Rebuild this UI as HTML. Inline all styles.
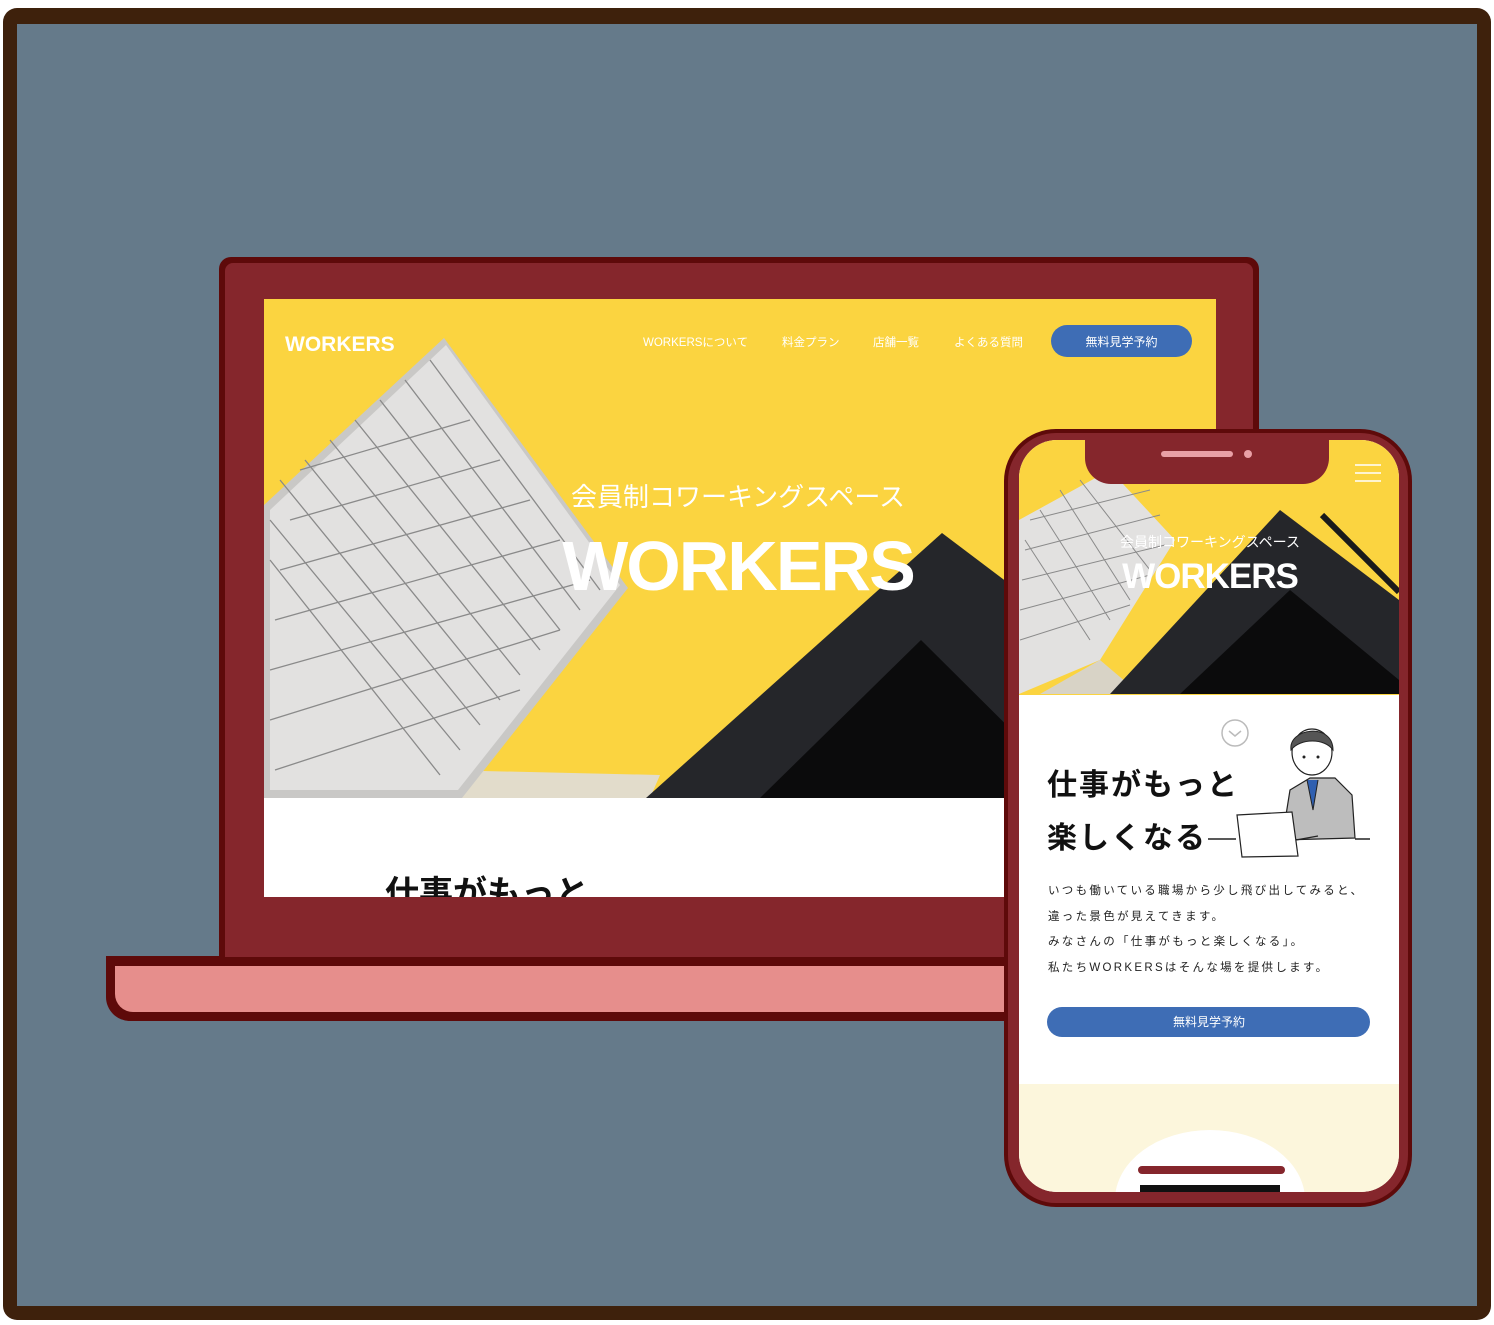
<!DOCTYPE html>
<html><head><meta charset="utf-8"><style>
*{margin:0;padding:0;box-sizing:border-box}
body{width:1494px;height:1325px;background:#fff;position:relative;overflow:hidden;font-family:"Liberation Sans","Noto Sans CJK JP",sans-serif}
.a{position:absolute}
</style></head><body>
<div class="a" style="left:3px;top:8px;width:1488px;height:1312px;background:#3e210c;border-radius:14px"></div>
<div class="a" style="left:17px;top:24px;width:1460px;height:1282px;background:#657a8a"></div>

<div class="a" style="left:106px;top:956px;width:1270px;height:65px;background:#5e0a0a;border-radius:0 0 0 24px"></div>
<div class="a" style="left:115px;top:966px;width:1255px;height:46px;background:#e68e8c;border-radius:0 0 0 18px"></div>
<div class="a" style="left:219px;top:257px;width:1040px;height:702px;background:#5e0a0a;border-radius:12px 12px 0 0"></div>
<div class="a" style="left:225px;top:263px;width:1028px;height:694px;background:#85262c;border-radius:8px 8px 0 0"></div>
<div class="a" style="left:264px;top:299px;width:952px;height:598px;background:#fff;overflow:hidden">
<svg width="952" height="598" viewBox="264 299 952 598" style="position:absolute;left:0;top:0">
<rect x="264" y="299" width="952" height="499" fill="#fbd440"/>
<polygon points="440,770 660,775 650,798 440,798" fill="#e2dccb"/>
<polygon points="444,338 628,588 462,798 264,798 264,505" fill="#c9c8c6"/>
<polygon points="446,345 620,585 458,790 270,790 270,510" fill="#e2e1e0"/>
<g stroke="#8a8a8a" stroke-width="1.3" fill="none">
<path d="M430,360 L600,590 M405,380 L580,610 M380,400 L560,630 M355,420 L540,650 M330,440 L520,675 M305,460 L500,700 M280,480 L480,725 M270,520 L460,750 M270,560 L440,775"/>
<path d="M300,470 L470,420 M290,520 L500,460 M280,570 L530,500 M275,620 L560,540 M270,670 L590,580 M270,720 L560,630 M275,770 L520,690"/>
</g>
<polygon points="646,798 942,533 1216,740 1216,798" fill="#25262a"/>
<polygon points="760,798 921,640 1080,798" fill="#0b0b0c"/>
<text x="285" y="351" fill="#fff" font-size="21" font-weight="bold" font-family="Liberation Sans">WORKERS</text>
<g fill="#fff" font-size="11.5">
<text x="643" y="346">WORKERSについて</text>
<text x="782" y="346">料金プラン</text>
<text x="873" y="346">店舗一覧</text>
<text x="954" y="346">よくある質問</text>
</g>
<rect x="1051" y="325" width="141" height="32" rx="16" fill="#3e6db5"/>
<text x="1121.5" y="346" fill="#fff" font-size="12" text-anchor="middle">無料見学予約</text>
<text x="738" y="506" fill="#fff" font-size="26" text-anchor="middle">会員制コワーキングスペース</text>
<text x="738" y="590" fill="#fff" font-size="70" font-weight="bold" text-anchor="middle" letter-spacing="-2">WORKERS</text>
<text x="385" y="905" fill="#111" font-size="34" font-weight="bold">仕事がもっと</text>
</svg>
</div>

<div class="a" style="left:1004px;top:429px;width:408px;height:778px;background:#5e0a0a;border-radius:52px"></div>
<div class="a" style="left:1008px;top:433px;width:400px;height:770px;background:#85262c;border-radius:48px"></div>
<div class="a" style="left:1019px;top:440px;width:380px;height:752px;background:#fff;border-radius:38px;overflow:hidden">
<svg width="380" height="752" viewBox="1019 440 380 752" style="position:absolute;left:0;top:0">
<rect x="1019" y="440" width="380" height="255" fill="#fbd440"/>
<polygon points="1110,470 1175,540 1100,660 1019,694 1019,520" fill="#e2e1e0"/>
<polygon points="1040,694 1100,660 1140,694" fill="#d8d3c6"/>
<g stroke="#8a8a8a" stroke-width="1"><path d="M1030,520 L1150,490 M1025,550 L1160,515 M1022,580 L1165,545 M1020,610 L1150,575 M1020,640 L1130,605 M1060,490 L1130,600 M1040,510 L1110,620 M1025,540 L1090,640 M1080,480 L1150,570"/></g>
<polygon points="1110,694 1280,510 1399,600 1399,694" fill="#25262a"/>
<polygon points="1180,694 1290,590 1399,680 1399,694" fill="#0b0b0c"/>
<line x1="1322" y1="515" x2="1399" y2="592" stroke="#1a1a1a" stroke-width="6"/>
<text x="1210" y="547" fill="#fff" font-size="14" text-anchor="middle">会員制コワーキングスペース</text>
<text x="1210" y="588" fill="#fff" font-size="35" font-weight="bold" text-anchor="middle" letter-spacing="-1">WORKERS</text>
<g stroke="#fff" stroke-width="1.5"><line x1="1355" y1="465" x2="1381" y2="465"/><line x1="1355" y1="473" x2="1381" y2="473"/><line x1="1355" y1="481" x2="1381" y2="481"/></g>
<circle cx="1235" cy="733" r="13" fill="none" stroke="#bbb" stroke-width="1.5"/>
<path d="M1229,731 L1235,736 L1241,731" fill="none" stroke="#bbb" stroke-width="1.5"/>
<text x="1047" y="795" fill="#111" font-size="30" font-weight="bold" letter-spacing="2">仕事がもっと</text>
<text x="1047" y="848" fill="#111" font-size="30" font-weight="bold" letter-spacing="2">楽しくなる</text>
<line x1="1208" y1="839" x2="1236" y2="839" stroke="#222" stroke-width="1.5"/>
<line x1="1355" y1="839" x2="1370" y2="839" stroke="#222" stroke-width="1.5"/>
<path d="M1282,840 L1290,790 L1310,778 L1335,778 L1352,795 L1355,838 Z" fill="#bdbdbd" stroke="#222" stroke-width="1.2"/>
<path d="M1307,780 L1313,810 L1318,780" fill="#2f5fb0" stroke="#222"/>
<ellipse cx="1312" cy="752" rx="20" ry="23" fill="#fff" stroke="#222" stroke-width="1.2"/>
<path d="M1291,750 C1288,728 1333,722 1333,750 C1325,738 1300,738 1291,750 Z" fill="#555" stroke="#222"/>
<circle cx="1304" cy="757" r="1.5" fill="#222"/><circle cx="1318" cy="757" r="1.5" fill="#222"/>
<path d="M1237,815 L1292,812 L1298,856 L1242,857 Z" fill="#fff" stroke="#222" stroke-width="1.2"/>
<path d="M1296,840 L1318,836" stroke="#222" stroke-width="1.2"/>
<g fill="#222" font-size="11.5" letter-spacing="2.3">
<text x="1048" y="894">いつも働いている職場から少し飛び出してみると、</text>
<text x="1048" y="920">違った景色が見えてきます。</text>
<text x="1048" y="945">みなさんの「仕事がもっと楽しくなる」。</text>
<text x="1048" y="971">私たちWORKERSはそんな場を提供します。</text>
</g>
<rect x="1047" y="1007" width="323" height="30" rx="15" fill="#3e6db5"/>
<text x="1209" y="1026" fill="#fff" font-size="12" text-anchor="middle">無料見学予約</text>
<rect x="1019" y="1084" width="380" height="120" fill="#fcf6dc"/>
<ellipse cx="1210" cy="1200" rx="95" ry="70" fill="#fff"/>
<rect x="1140" y="1185" width="140" height="10" fill="#111"/>
</svg>
</div>
<div class="a" style="left:1085px;top:438px;width:244px;height:46px;background:#85262c;border-radius:0 0 26px 26px"></div>
<div class="a" style="left:1161px;top:451px;width:72px;height:6px;background:#e9a0a6;border-radius:3px"></div>
<div class="a" style="left:1244px;top:450px;width:8px;height:8px;background:#e9a0a6;border-radius:50%"></div>
<div class="a" style="left:1138px;top:1166px;width:147px;height:8px;background:#85262c;border-radius:4px"></div>
</body></html>
